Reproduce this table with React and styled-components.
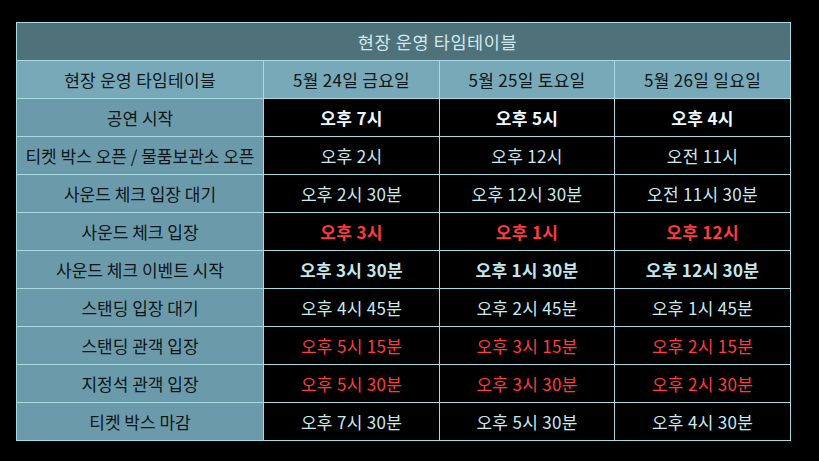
import React from 'react';
import styled, { createGlobalStyle } from 'styled-components';

const GlobalStyle = createGlobalStyle`
  html, body {
    margin: 0;
    padding: 0;
    background: #000;
    font-family: "Noto Sans CJK KR", "Noto Sans", sans-serif;
  }
`;

const Page = styled.div`
  width: 819px;
  height: 461px;
  background: #000;
  padding: 22px 0 0 16px;
  box-sizing: border-box;
`;

const Table = styled.table`
  width: 774px;
  border-collapse: collapse;
  table-layout: fixed;
  font-size: 17px;
  letter-spacing: 0.3px;
`;

const Col = styled.col`
  width: ${(p) => p.$w}px;
`;

const TitleCell = styled.th`
  height: 37px;
  padding: 0 0 0 68px;
  background: #4e717a;
  color: #d2e9ee;
  font-weight: 400;
  font-size: 17.5px;
  letter-spacing: 0.6px;
  border: 1px solid #a6dbe4;
`;

const HeadCell = styled.td`
  height: 37px;
  padding: 0;
  text-align: center;
  background: #78a9b9;
  color: #0d1518;
  border: 1px solid #a6dbe4;
`;

const LabelCell = styled.td`
  height: 37px;
  padding: 0;
  text-align: center;
  background: #6b9bab;
  color: #0d1518;
  letter-spacing: 0;
  border: 1px solid #a6dbe4;
`;

const tones = {
  normal: '#c9eaef',
  strong: '#eefcff',
  accent: '#c2e8ee',
  red: '#ff3b3b',
};

const TimeCell = styled.td`
  height: 37px;
  padding: 0;
  text-align: center;
  background: #000;
  color: ${(p) => tones[p.$tone]};
  font-weight: ${(p) => (p.$bold ? 700 : 400)};
  border: 1px solid #a6dbe4;
`;

const rows = [
  { label: '공연 시작', times: ['오후 7시', '오후 5시', '오후 4시'], tone: 'strong', bold: true },
  { label: '티켓 박스 오픈 / 물품보관소 오픈', times: ['오후 2시', '오후 12시', '오전 11시'], tone: 'normal' },
  { label: '사운드 체크 입장 대기', times: ['오후 2시 30분', '오후 12시 30분', '오전 11시 30분'], tone: 'normal' },
  { label: '사운드 체크 입장', times: ['오후 3시', '오후 1시', '오후 12시'], tone: 'red', bold: true },
  { label: '사운드 체크 이벤트 시작', times: ['오후 3시 30분', '오후 1시 30분', '오후 12시 30분'], tone: 'accent', bold: true },
  { label: '스탠딩 입장 대기', times: ['오후 4시 45분', '오후 2시 45분', '오후 1시 45분'], tone: 'normal' },
  { label: '스탠딩 관객 입장', times: ['오후 5시 15분', '오후 3시 15분', '오후 2시 15분'], tone: 'red' },
  { label: '지정석 관객 입장', times: ['오후 5시 30분', '오후 3시 30분', '오후 2시 30분'], tone: 'red' },
  { label: '티켓 박스 마감', times: ['오후 7시 30분', '오후 5시 30분', '오후 4시 30분'], tone: 'normal' },
];

const days = ['5월 24일 금요일', '5월 25일 토요일', '5월 26일 일요일'];

export default function App() {
  return (
    <Page>
      <GlobalStyle />
      <Table>
        <colgroup>
          <Col $w={247} />
          <Col $w={176} />
          <Col $w={175} />
          <Col $w={176} />
        </colgroup>
        <thead>
          <tr>
            <TitleCell colSpan={4}>현장 운영 타임테이블</TitleCell>
          </tr>
        </thead>
        <tbody>
          <tr>
            <HeadCell>현장 운영 타임테이블</HeadCell>
            {days.map((d) => (
              <HeadCell key={d}>{d}</HeadCell>
            ))}
          </tr>
          {rows.map((r) => (
            <tr key={r.label}>
              <LabelCell>{r.label}</LabelCell>
              {r.times.map((t, i) => (
                <TimeCell key={i} $tone={r.tone} $bold={r.bold}>
                  {t}
                </TimeCell>
              ))}
            </tr>
          ))}
        </tbody>
      </Table>
    </Page>
  );
}
